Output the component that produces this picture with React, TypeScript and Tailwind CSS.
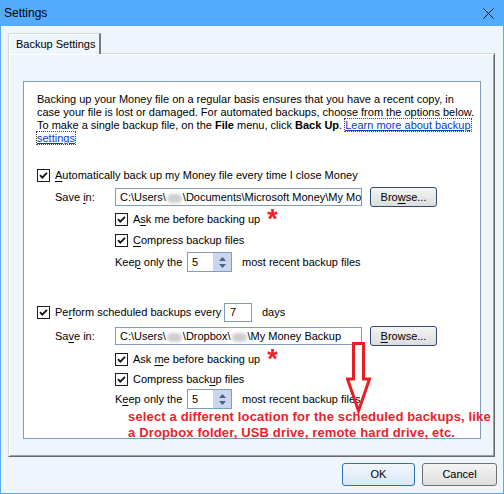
import type { ReactNode } from "react";

const ui = { fontFamily: '"Liberation Sans", Arial, sans-serif' };

function Check() {
  return (
    <svg width="13" height="13" viewBox="0 0 13 13" className="shrink-0">
      <rect x="0.5" y="0.5" width="12" height="12" fill="#fff" stroke="#1c1c1c" />
      <path d="M3 6.2 L5.3 8.6 L10 3.8" fill="none" stroke="#111" strokeWidth="1.8" />
    </svg>
  );
}

function Blur() {
  return <span className="inline-block w-[15px] h-[9px] mx-[1px] rounded-full bg-[#cfcfcf] blur-[1.5px] align-middle" />;
}

function U({ children }: { children: ReactNode }) {
  return <span className="underline underline-offset-2">{children}</span>;
}

function Star() {
  return (
    <span className="ml-[2px] -mt-[6px] h-[16px] text-[27px] leading-[22px] font-bold text-[#f0202a]">*</span>
  );
}

function Browse({ first }: { first: ReactNode }) {
  return (
    <button className="ml-[8px] w-[67px] h-[20px] rounded-[3px] border border-[#2f4b70] bg-gradient-to-b from-[#f4f4f4] to-[#dcdcdc] text-[11px] text-black">
      {first}
    </button>
  );
}

function Spinner() {
  return (
    <div className="ml-[4px] flex w-[45px] h-[20px] border border-[#7f9db9] bg-white">
      <div className="flex-1 pl-[4px] leading-[18px]">5</div>
      <div className="w-[18px] flex flex-col items-center justify-around bg-[#c8d6f0] py-[2px]">
        <svg width="7" height="4" viewBox="0 0 7 4">
          <path d="M0 4 L3.5 0 L7 4 Z" fill="#4d6185" />
        </svg>
        <svg width="7" height="4" viewBox="0 0 7 4">
          <path d="M0 0 L3.5 4 L7 0 Z" fill="#4d6185" />
        </svg>
      </div>
    </div>
  );
}

export default function App() {
  return (
    <div className="w-[504px] h-[494px] flex flex-col bg-[#55abff] text-[11px] text-black" style={ui}>
      <div className="h-[26px] flex items-center justify-between pl-[4px] pr-[10px] shrink-0">
        <span className="text-[12px]">Settings</span>
        <svg width="11" height="11" viewBox="0 0 11 11">
          <path d="M0.5 0.5 L10.5 10.5 M10.5 0.5 L0.5 10.5" stroke="#111" strokeWidth="1" />
        </svg>
      </div>
      <div className="flex-1 mx-[1px] mb-[1px] bg-[#eff5fc] flex flex-col pl-[7px] pt-[7px]">
        <div className="w-[93px] h-[21px] -mb-[1px] z-10 flex items-center pl-[7px] border-l border-t border-[#d8d8d8] border-r-2 border-r-[#7a7a7a] bg-[#eff5fc] shadow-[inset_1px_1px_0_#fff]">
          Backup Settings
        </div>
        <div className="w-[487px] h-[404px] pl-[14px] pt-[27px] border-l border-t border-[#d8d8d8] border-r border-b border-r-[#696969] border-b-[#696969] shadow-[inset_1px_1px_0_#fff,inset_-1px_-1px_0_#a0a0a0]">
          <div className="relative w-[458px] h-[358px] border border-[#7f9db9] bg-white pl-[13px] pt-[11px] flex flex-col">
            <p className="leading-[13px] whitespace-nowrap">
              Backing up your Money file on a regular basis ensures that you have a recent copy, in
              <br />
              case your file is lost or damaged. For automated backups, choose from the options below.
              <br />
              To make a single backup file, on the <b>File</b> menu, click <b>Back Up</b>.{" "}
              <span className="text-[#0b3bc7] underline outline-1 outline-dotted outline-[#444]">Learn more about backup</span>
              <br />
              <span className="text-[#0b3bc7] underline outline-1 outline-dotted outline-[#444]">settings</span>
            </p>

            <div className="mt-[22px] h-[16px] flex items-center gap-[5px]">
              <Check />
              <span><U>A</U>utomatically back up my Money file every time I close Money</span>
            </div>
            <div className="mt-[4px] h-[20px] flex items-center">
              <span className="ml-[18px] w-[60px]">Save <U>i</U>n:</span>
              <div className="w-[247px] h-[18px] border border-[#7f9db9] bg-white pl-[4px] leading-[16px] whitespace-nowrap overflow-hidden">
                C:\Users\<Blur />\Documents\Microsoft Money\My Money Backup
              </div>
              <Browse first={<>Bro<U>w</U>se...</>} />
            </div>
            <div className="mt-[4px] h-[16px] flex items-center gap-[5px] pl-[78px]">
              <Check />
              <span>A<U>s</U>k me before backing up</span>
              <Star />
            </div>
            <div className="mt-[5px] h-[16px] flex items-center gap-[5px] pl-[78px]">
              <Check />
              <span><U>C</U>ompress backup files</span>
            </div>
            <div className="mt-[4px] h-[20px] flex items-center pl-[78px]">
              <span className="w-[68px]">Kee<U>p</U> only the</span>
              <Spinner />
              <span className="ml-[10px]">most recent backup files</span>
            </div>

            <div className="mt-[30px] h-[20px] flex items-center gap-[5px]">
              <Check />
              <span className="w-[164px] whitespace-nowrap">Pe<U>r</U>form scheduled backups every</span>
              <div className="w-[28px] h-[19px] border border-[#7f9db9] bg-white pl-[5px] leading-[16px]">7</div>
              <span className="ml-[5px]">days</span>
            </div>
            <div className="mt-[4px] h-[20px] flex items-center">
              <span className="ml-[18px] w-[60px]">Sa<U>v</U>e in:</span>
              <div className="w-[247px] h-[18px] border border-[#7f9db9] bg-white pl-[4px] leading-[16px] whitespace-nowrap overflow-hidden">
                C:\Users\<Blur />\Dropbox\<Blur />\My Money Backup
              </div>
              <Browse first={<><U>B</U>rowse...</>} />
            </div>
            <div className="mt-[5px] h-[16px] flex items-center gap-[5px] pl-[78px]">
              <Check />
              <span>Ask <U>m</U>e before backing up</span>
              <Star />
            </div>
            <div className="mt-[4px] h-[16px] flex items-center gap-[5px] pl-[78px]">
              <Check />
              <span>Compress back<U>u</U>p files</span>
            </div>
            <div className="mt-[2px] h-[20px] flex items-center pl-[78px]">
              <span className="w-[68px]">K<U>e</U>ep only the</span>
              <Spinner />
              <span className="ml-[10px]">most recent backup files</span>
            </div>

            <svg className="absolute left-[322px] top-[260px] overflow-hidden" width="26" height="74" viewBox="0 0 26 74">
              <path
                d="M7.5 1.5 H17.5 V37 H23.5 L12.5 69 L1.5 37 H7.5 Z"
                fill="none"
                stroke="#ec1c24"
                strokeWidth="3"
                strokeLinejoin="miter"
                strokeMiterlimit="10"
              />
            </svg>
            <div className="absolute left-[104px] top-[327px] whitespace-nowrap text-[13px] tracking-[0.15px] leading-[16px] font-bold text-[#f0202a]">
              select a different location for the scheduled backups, like
              <br />
              a Dropbox folder, USB drive, remote hard drive, etc.
            </div>
          </div>
        </div>
        <div className="mt-[6px] flex justify-end gap-[7px] pr-[6px]">
          <button className="w-[73px] h-[23px] rounded-[3px] border border-[#2b72b6] bg-gradient-to-b from-[#f2f7fc] to-[#dbe7f4] text-[11px]">
            OK
          </button>
          <button className="w-[75px] h-[23px] rounded-[3px] border border-[#707070] bg-gradient-to-b from-[#f4f4f4] to-[#dedede] text-[11px]">
            Cancel
          </button>
        </div>
      </div>
    </div>
  );
}
